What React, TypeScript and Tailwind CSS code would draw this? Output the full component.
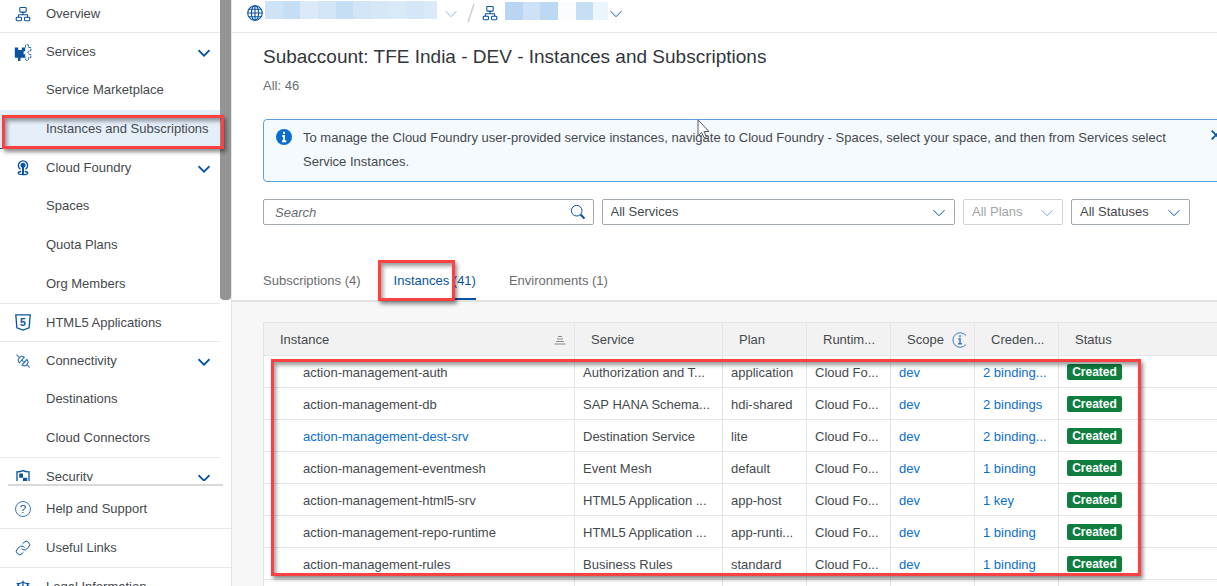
import type { ReactNode } from 'react';
import { Link, Scale } from 'lucide-react';

function OrgIcon() {
  return (
    <svg viewBox="0 0 16 16" className="size-4" fill="none" stroke="currentColor" strokeWidth="1.1">
      <rect x="4.8" y="1.5" width="6.4" height="4.6" rx="0.8" />
      <path d="M8 6.1v2.7M3.4 11V9.3q0-.5.5-.5h8.200q.5 0 .5.5V11" />
      <rect x="1.2" y="11.300" width="5.300" height="3.400" rx="0.9" />
      <rect x="9.5" y="11.300" width="5.300" height="3.400" rx="0.9" />
    </svg>
  );
}

function PuzzleIcon() {
  return (
    <svg viewBox="0 0 18 18" className="h-[18px] w-[18px]">
      <path
        fill="currentColor"
        d="M.8 4.500h3.400v2.500h3.600V4.500h3.400v3.800H9.600v3h1.600v3.400H6.500v2.200a1.300 1.300 0 0 1-2.600 0v-2.200H.8z"
      />
      <path
        fill="none"
        stroke="currentColor"
        strokeDasharray="3 0.600"
        strokeWidth="0.9"
        d="M11.500 4.500V3a1.500 1.500 0 0 1 3 0v1.500h2.300v3.400h-1.300a1.600 1.600 0 0 0 0 3.400h1.300v3.400h-2.300v1.300a1.500 1.500 0 0 1-3 0v-1.300"
      />
    </svg>
  );
}

function FoundryIcon() {
  return (
    <svg viewBox="0 0 16 18" className="h-[18px] w-4" fill="none" stroke="currentColor">
      <path strokeWidth="1.400" d="M5.400 10.300a4.600 4.600 0 1 1 5.200 0" />
      <circle cx="8" cy="6.300" r="2.500" fill="currentColor" stroke="none" />
      <path strokeWidth="2" d="M8 8v7" />
      <path strokeWidth="1.300" d="M6.200 12.500c-2.200.3-3 1-3 1.600 0 1 2 1.600 4.800 1.600s4.800-.6 4.800-1.600c0-.6-.8-1.300-3-1.600" />
    </svg>
  );
}

function Html5Icon() {
  return (
    <svg viewBox="0 0 16 17" className="h-[17px] w-4">
      <path d="M.8.900h14.400l-1.100 13L8 16.100l-6.100-2.200z" fill="none" stroke="currentColor" strokeWidth="1.300" />
      <text x="8" y="11.800" textAnchor="middle" fontSize="10.500" fontWeight="900" fill="currentColor">
        5
      </text>
    </svg>
  );
}

function PlugIcon() {
  return (
    <svg viewBox="0 0 16 16" className="size-4" fill="none" stroke="#3d78b8" strokeWidth="1.200">
      <path d="M1.500 1.700l3.200 3.200M11.600 11.600l3.200 3" />
      <path d="M4.300 9.800a3.700 3.700 0 0 1 4.900-5.500z" />
      <path d="M11.900 6.500a3.700 3.700 0 0 1-4.900 5.500z" />
      <path d="M6.900 7.300l.9.900M8.600 8.200l.8.800" stroke="#0854a0" />
    </svg>
  );
}

function ShieldIcon() {
  return (
    <svg viewBox="0 0 16 16" className="size-4">
      <path
        d="M2 14V2.800Q5 3 8 1.600q3 1.400 6 1.200V14L8 16z"
        fill="none"
        stroke="currentColor"
        strokeWidth="1.300"
      />
      <path d="M4.200 4.600H8v4.200H4.200zM8 8.800h4.200v3.600L8 14z" fill="currentColor" />
    </svg>
  );
}

function HelpIcon() {
  return (
    <svg viewBox="0 0 16 16" className="size-4">
      <circle cx="8" cy="8" r="7.500" fill="none" stroke="#3d78b8" strokeWidth="1" />
      <text x="8" y="12" textAnchor="middle" fontSize="11.500" fontWeight="400" fill="currentColor">
        ?
      </text>
    </svg>
  );
}

function GlobeIcon() {
  return (
    <svg viewBox="0 0 16 16" className="size-4" fill="none" stroke="currentColor" strokeWidth="1.100">
      <circle cx="8" cy="8" r="7.300" />
      <ellipse cx="8" cy="8" rx="3.600" ry="7.300" />
      <path d="M8 .7v14.600M.7 8h14.600M1.800 4.300h12.400M1.800 11.700h12.400" />
    </svg>
  );
}

function Chevron({ className = '' }: { className?: string }) {
  return (
    <svg viewBox="0 0 12 8" className={`h-2 w-3 shrink-0 ${className}`} fill="none" stroke="currentColor">
      <path d="M.5 1.200L6 6.700l5.500-5.500" />
    </svg>
  );
}

function Highlight({ className }: { className: string }) {
  return (
    <div
      aria-hidden="true"
      className={`pointer-events-none absolute z-10 border-3 border-[#fb4141] shadow-[2px_3px_4px_rgba(0,0,0,0.45),inset_2px_3px_4px_rgba(0,0,0,0.4)] ${className}`}
    />
  );
}

type NavItem = { label: string; icon?: ReactNode; children?: string[]; line?: boolean };

const nav: NavItem[] = [
  { label: 'Overview', icon: <OrgIcon />, line: true },
  { label: 'Services', icon: <PuzzleIcon />, children: ['Service Marketplace', 'Instances and Subscriptions'] },
  { label: 'Cloud Foundry', icon: <FoundryIcon />, children: ['Spaces', 'Quota Plans', 'Org Members'], line: true },
  { label: 'HTML5 Applications', icon: <Html5Icon />, line: true },
  { label: 'Connectivity', icon: <PlugIcon />, children: ['Destinations', 'Cloud Connectors'], line: true },
  { label: 'Security', icon: <ShieldIcon />, children: [] },
];

const footerNav: NavItem[] = [
  { label: 'Help and Support', icon: <HelpIcon /> },
  { label: 'Useful Links', icon: <Link className="size-4" strokeWidth={1.5} /> },
  { label: 'Legal Information', icon: <Scale className="size-4" strokeWidth={1.8} /> },
];

function NavIcon({ children }: { children: ReactNode }) {
  return <span className="flex w-[46px] shrink-0 justify-center text-[#0854a0]">{children}</span>;
}

function Sidebar() {
  return (
    <aside className="flex w-[232px] shrink-0 flex-col border-r border-[#e5e5e5] bg-white">
      <div className="relative flex h-[481px] shrink-0 overflow-hidden">
        <nav className="-mt-[5px] w-[220px] shrink-0">
          <ul>
            {nav.map((item) => (
              <li key={item.label} className={item.line ? 'shadow-[inset_0_-1px_#e8e8e8]' : ''}>
                {item.children ? (
                  <button className="flex h-[38px] w-full items-center pr-2.5 pb-px text-left">
                    <NavIcon>{item.icon}</NavIcon>
                    <span className="flex-1">{item.label}</span>
                    <Chevron className="mt-0.5 stroke-[1.8] text-[#0854a0]" />
                  </button>
                ) : (
                  <a href="#" className="flex h-[38px] items-center pb-px">
                    <NavIcon>{item.icon}</NavIcon>
                    {item.label}
                  </a>
                )}
                {item.children && (
                  <ul>
                    {item.children.map((child) => (
                      <li key={child} className="relative">
                        <a
                          href="#"
                          className={`flex h-[39px] items-center pl-[46px] whitespace-nowrap ${
                            child === 'Instances and Subscriptions' ? 'border-b border-[#0854a0] bg-[#e5effa]' : 'pb-px'
                          }`}
                        >
                          {child}
                        </a>
                        {child === 'Instances and Subscriptions' && (
                          <Highlight className="top-[5px] left-0.5 h-[34px] w-[222px]" />
                        )}
                      </li>
                    ))}
                  </ul>
                )}
              </li>
            ))}
          </ul>
        </nav>
        <div className="h-[300px] w-[11px] rounded-b bg-[#949494]" />
      </div>
      <hr className="mt-[3px] mr-2 ml-2 border-t-2 border-[#d9d9d9]" />
      <ul className="pt-1">
        {footerNav.map((item) => (
          <li key={item.label}>
            <a href="#" className="flex h-[39px] items-center border-b border-[#e8e8e8]">
              <NavIcon>{item.icon}</NavIcon>
              {item.label}
            </a>
          </li>
        ))}
      </ul>
    </aside>
  );
}

function Breadcrumb() {
  return (
    <header className="flex h-[33px] items-start border-b border-[#e5e5e5] pl-[15px] text-[#0854a0]">
      <span className="mt-[5px]">
        <GlobeIcon />
      </span>
      <span className="ml-0.5 mt-px flex h-[18px]">
        <i className="w-[18px] bg-[#cfe3f6]" />
        <i className="w-[17px] bg-[#c6def4]" />
        <i className="w-[18px] bg-[#dceaf8]" />
        <i className="w-[18px] bg-[#d2e5f7]" />
        <i className="w-[17px] bg-[#c6def4]" />
        <i className="w-[18px] bg-[#d2e5f7]" />
        <i className="w-[18px] bg-[#d6e7f8]" />
        <i className="w-[18px] bg-[#d9e9f8]" />
        <i className="w-[17px] bg-[#d4e6f7]" />
        <i className="w-[13px] bg-[#d9e9f9]" />
      </span>
      <Chevron className="mt-[10px] ml-2 text-[#8fb4d8]" />
      <svg viewBox="0 0 8 20" className="mt-[3px] ml-2.5 h-5 w-2" stroke="#cfcfcf" strokeWidth="1.500">
        <path d="M7 1L1 19" />
      </svg>
      <span className="mt-[5px] ml-[7px]">
        <OrgIcon />
      </span>
      <span className="mt-0.5 ml-[7px] flex h-[18px]">
        <i className="w-[18px] bg-[#b9d5f1]" />
        <i className="w-[17px] bg-[#cfe1f6]" />
        <i className="w-[18px] bg-[#bcd8f3]" />
        <i className="w-[18px] bg-[#fafcfe]" />
        <i className="w-[17px] bg-[#c6dff4]" />
        <i className="w-[15px] bg-[#ecf4fc]" />
      </span>
      <Chevron className="mt-[10px] ml-0.5" />
    </header>
  );
}

function Filter({ label, className, disabled = false }: { label: string; className: string; disabled?: boolean }) {
  return (
    <div className={`relative ${disabled ? 'opacity-50' : ''} ${className}`}>
      <select
        aria-label={label}
        disabled={disabled}
        className="h-[26px] w-full appearance-none rounded-xs border border-[#a3a9b0] bg-white pr-8 pl-2 text-[#45494d]"
      >
        <option>{label}</option>
      </select>
      <Chevron className="pointer-events-none absolute top-[10px] right-[10px] text-[#0854a0]" />
    </div>
  );
}

const rows = [
  ['action-management-auth', 'Authorization and T...', 'application', '2 binding...'],
  ['action-management-db', 'SAP HANA Schema...', 'hdi-shared', '2 bindings'],
  ['action-management-dest-srv', 'Destination Service', 'lite', '2 binding...'],
  ['action-management-eventmesh', 'Event Mesh', 'default', '1 binding'],
  ['action-management-html5-srv', 'HTML5 Application ...', 'app-host', '1 key'],
  ['action-management-repo-runtime', 'HTML5 Application ...', 'app-runti...', '1 binding'],
  ['action-management-rules', 'Business Rules', 'standard', '1 binding'],
];

const th = 'border-r border-[#e5e5e5] pt-0.5 pl-4 text-left font-normal';
const td = 'border-r border-b border-[#e5e5e5] pt-0.5 pl-2';

function InstancesTable() {
  return (
    <div className="relative">
      <table className="w-full table-fixed border-separate border-spacing-0 border-l border-[#e5e5e5] bg-white whitespace-nowrap">
        <colgroup>
          <col className="w-[311px]" />
          <col className="w-[148px]" />
          <col className="w-[84px]" />
          <col className="w-[84px]" />
          <col className="w-[84px]" />
          <col className="w-[84px]" />
          <col />
        </colgroup>
        <thead>
          <tr className="h-[34px] bg-[#f2f2f2] *:border-y">
            <th className={th}>
              <span className="flex items-center justify-between pr-2">
                Instance
                <svg viewBox="0 0 12 10" className="h-2.5 w-3" stroke="#8a8d90" strokeWidth="1">
                  <path d="M4 1.500h4M3 4h6M2 6.500h8M.5 9h11" />
                </svg>
              </span>
            </th>
            <th className={th}>Service</th>
            <th className={th}>Plan</th>
            <th className={th}>Runtim...</th>
            <th className={th}>
              <span className="flex items-center gap-2">
                Scope
                <svg viewBox="0 0 16 16" className="size-4 shrink-0 text-[#3d7fbd]">
                  <path d="M14 3.500a7.300 7.300 0 1 0 0 9" fill="none" stroke="currentColor" />
                  <path d="M8 3.200v2M6.300 7H8v4.500M6 11.700h4" fill="none" stroke="currentColor" strokeWidth="1.500" />
                </svg>
              </span>
            </th>
            <th className={th}>Creden...</th>
            <th className="border-[#e5e5e5] pt-0.5 pl-4 text-left font-normal">Status</th>
          </tr>
        </thead>
        <tbody>
          {rows.map(([name, service, plan, credentials]) => (
            <tr key={name} className="h-8">
              <td className="border-r border-b border-[#e5e5e5] pt-0.5 pl-[39px]">
                {name === 'action-management-dest-srv' ? (
                  <a href="#" className="text-[#0a6ed1]">
                    {name}
                  </a>
                ) : (
                  name
                )}
              </td>
              <td className={td}>{service}</td>
              <td className={td}>{plan}</td>
              <td className={td}>Cloud Fo...</td>
              <td className={td}>
                <a href="#" className="text-[#0a6ed1]">
                  dev
                </a>
              </td>
              <td className={td}>
                <a href="#" className="text-[#0a6ed1]">
                  {credentials}
                </a>
              </td>
              <td className="border-b border-[#e5e5e5] pl-2">
                <span className="flex h-4 w-[55px] items-center justify-center rounded-xs bg-[#107e3e] text-xs font-bold text-white">
                  Created
                </span>
              </td>
            </tr>
          ))}
          <tr className="h-8">
            <td className={td} />
            <td className={td} />
            <td className={td} />
            <td className={td} />
            <td className={td} />
            <td className={td} />
            <td />
          </tr>
        </tbody>
      </table>
      <Highlight className="top-[37px] left-2 h-[217px] w-[870px]" />
    </div>
  );
}

export default function App() {
  return (
    <div className="flex h-screen overflow-hidden bg-white font-['Liberation_Sans',sans-serif] text-[13px] text-[#45494d]">
      <Sidebar />
      <main className="min-w-0 flex-1 overflow-hidden bg-[#f7f7f7]">
        <section className="border-b-2 border-[#e2e2e2] bg-white">
          <Breadcrumb />
          <div className="pl-[31px]">
            <h1 className="pt-3 text-[19px] leading-6 text-[#32363a]">
              Subaccount: TFE India - DEV - Instances and Subscriptions
            </h1>
            <p className="pt-[7px] leading-5 text-[#6a6d70]">All: 46</p>
            <div className="relative -mr-2 mt-[23px] flex items-start rounded border border-[#5f9fe0] bg-[#f5faff] pt-1.5 pb-[7px] pl-3 leading-6">
              <svg viewBox="0 0 16 16" className="mt-[3px] size-4 shrink-0">
                <circle cx="8" cy="8" r="8" fill="#0a6ed1" />
                <path d="M8 2.800v2.200M6.300 7H8v5M6 12.200h4.200" fill="none" stroke="#fff" strokeWidth="1.900" />
              </svg>
              <p className="ml-[11px] min-w-0 flex-1">
                To manage the Cloud Foundry user-provided service instances, navigate to Cloud Foundry - Spaces, select
                your space, and then from Services select Service Instances.
              </p>
              <button aria-label="Close" className="mt-1 mr-[3px] ml-5 shrink-0 text-[#0854a0]">
                <svg viewBox="0 0 10 10" className="size-2.5" stroke="currentColor" strokeWidth="1.800">
                  <path d="M.7.7l8.600 8.600M9.300.7L.7 9.300" />
                </svg>
              </button>
              <svg
                aria-hidden="true"
                viewBox="0 0 14 20"
                className="absolute -top-px left-[433px] h-5 w-3.5"
                fill="#fff"
                stroke="#55585c"
              >
                <path d="M1 .8v16l3.600-3.400 2.500 5.400 2.300-1-2.400-5.200h5z" />
              </svg>
            </div>
            <div className="mt-[17px] mr-[27px] flex gap-2">
              <div className="relative flex-[331]">
                <input
                  type="search"
                  aria-label="Search"
                  placeholder="Search"
                  className="h-[26px] w-full rounded-xs border border-[#a3a9b0] bg-white pr-8 pl-[11px] placeholder:text-[#6a6d70] placeholder:italic"
                />
                <svg
                  viewBox="0 0 16 16"
                  className="absolute top-[5px] right-2 size-4 text-[#0854a0]"
                  fill="none"
                  stroke="currentColor"
                >
                  <circle cx="6.700" cy="6.700" r="5.300" />
                  <path d="M10.500 10.500l4 4" strokeWidth="2" />
                </svg>
              </div>
              <Filter label="All Services" className="flex-[354]" />
              <Filter label="All Plans" className="w-[100px]" disabled />
              <Filter label="All Statuses" className="w-[119px]" />
            </div>
            <div role="tablist" className="mt-9 flex h-[39px] gap-[33px] text-[#6a6d70]">
              <button role="tab" className="border-b-2 border-transparent pt-0.5">
                Subscriptions (4)
              </button>
              <div className="relative flex">
                <button role="tab" aria-selected="true" className="border-b-2 border-[#0854a0] pt-0.5 text-[#0854a0]">
                  Instances (41)
                </button>
                <Highlight className="-top-px -left-4 h-[41px] w-[77px]" />
              </div>
              <button role="tab" className="border-b-2 border-transparent pt-0.5">
                Environments (1)
              </button>
            </div>
          </div>
        </section>
        <div className="pt-5 pl-[31px]">
          <InstancesTable />
        </div>
      </main>
    </div>
  );
}
